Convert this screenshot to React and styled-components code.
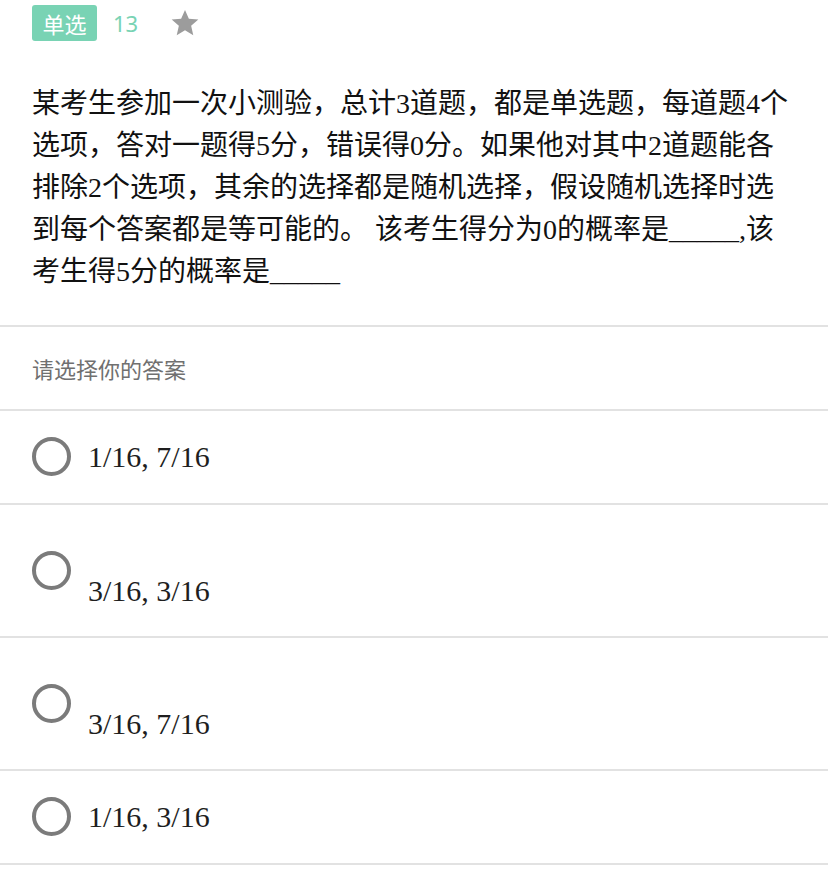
import styled, { createGlobalStyle } from "styled-components";

const GlobalStyle = createGlobalStyle`
   body {
      margin: 0;
      background: #fff;
      font-family: "Liberation Serif", "Noto Sans CJK SC", serif;
      color: #1a1a1a;
   }
`;

const Page = styled.div`
   width: 828px;
`;

const Header = styled.div`
   display: flex;
   align-items: center;
   padding: 5px 32px 0;
   height: 36px;
`;

const Badge = styled.span`
   display: inline-flex;
   align-items: center;
   justify-content: center;
   width: 65px;
   height: 36px;
   border-radius: 3px;
   background: #79d3b4;
   color: #fff;
   font-family: "Noto Sans CJK SC", sans-serif;
   font-size: 22px;
`;

const Count = styled.span`
   margin-left: 16px;
   color: #79d3b4;
   font-family: "Noto Sans", "Liberation Sans", sans-serif;
   font-size: 22px;
`;

const Star = styled.svg`
   margin-left: 31px;
   width: 32px;
   height: 32px;
   fill: #9c9c9c;
`;

const Question = styled.div`
   padding: 42px 32px 32px;
   border-bottom: 2px solid #e2e2e2;
   font-size: 28px;
   line-height: 42px;
   color: #111;
`;

const Line = styled.div`
   white-space: nowrap;
`;

const Hint = styled.div`
   padding: 27px 32px;
   border-bottom: 2px solid #e2e2e2;
   font-family: "Noto Sans CJK SC", sans-serif;
   font-size: 22px;
   line-height: 28px;
   color: #707070;
`;

const Option = styled.label`
   display: flex;
   align-items: ${(p) => (p.$dropped ? "flex-start" : "center")};
   gap: 17px;
   padding: 26px 32px 27px;
   border-bottom: 2px solid #e2e2e2;
`;

const Radio = styled.span`
   flex: none;
   box-sizing: border-box;
   width: 39px;
   height: 39px;
   margin-top: ${(p) => (p.$dropped ? "20px" : "0")};
   border: 4px solid #7b7b7b;
   border-radius: 50%;
`;

const Answer = styled.span`
   margin-top: ${(p) => (p.$dropped ? "42px" : "0")};
   font-size: 30px;
   line-height: 36px;
   color: #1e1e1e;
`;

const lines = [
   "某考生参加一次小测验，总计3道题，都是单选题，每道题4个",
   "选项，答对一题得5分，错误得0分。如果他对其中2道题能各",
   "排除2个选项，其余的选择都是随机选择，假设随机选择时选",
   "到每个答案都是等可能的。 该考生得分为0的概率是_____,该",
   "考生得5分的概率是_____",
];

const options = [
   { text: "1/16, 7/16", dropped: false },
   { text: "3/16, 3/16", dropped: true },
   { text: "3/16, 7/16", dropped: true },
   { text: "1/16, 3/16", dropped: false },
];

export default function App() {
   return (
      <Page>
         <GlobalStyle />
         <Header>
            <Badge>单选</Badge>
            <Count>13</Count>
            <Star viewBox="0 0 24 24">
               <path d="M12 2.2l2.9 6.6 7.1.6-5.4 4.7 1.6 7-6.2-3.7-6.2 3.7 1.6-7L2 9.4l7.1-.6z" />
            </Star>
         </Header>

         <Question>
            {lines.map((l) => (
               <Line key={l}>{l}</Line>
            ))}
         </Question>

         <Hint>请选择你的答案</Hint>

         {options.map((o) => (
            <Option key={o.text} $dropped={o.dropped}>
               <Radio $dropped={o.dropped} />
               <Answer $dropped={o.dropped}>{o.text}</Answer>
            </Option>
         ))}
      </Page>
   );
}
